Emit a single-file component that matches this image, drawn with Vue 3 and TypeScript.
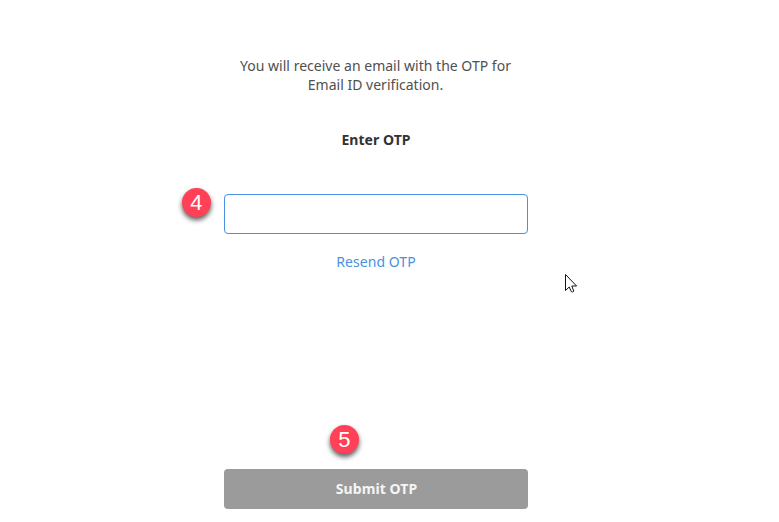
<script setup lang="ts">
import { ref } from 'vue'

const otp = ref<string>('')
</script>

<template>
  <main class="page">
    <form class="panel" @submit.prevent>
      <p class="intro">You will receive an email with the OTP for<br />Email ID verification.</p>
      <label class="label" for="otp">Enter OTP</label>
      <div class="field">
        <input id="otp" v-model="otp" class="input" type="text" />
        <span class="badge badge-input">4</span>
      </div>
      <a class="resend">Resend OTP</a>
      <div class="action">
        <button class="submit" type="submit">Submit OTP</button>
        <span class="badge badge-submit">5</span>
      </div>
    </form>
    <svg class="cursor" width="14" height="22" viewBox="0 0 14 22">
      <path d="M1.5 1.5V17.5L5.2 14L7.4 18.7Q8.6 19.6 9.8 18.2L7.8 13H12.6Z" fill="#fff" stroke="#111122" stroke-width="1" />
    </svg>
  </main>
</template>

<style>
body {
  margin: 0;
  background: #fff;
}
</style>

<style scoped>
.page {
  position: relative;
  box-sizing: border-box;
  width: 779px;
  height: 522px;
  padding: 56px 0 0 224px;
  overflow: hidden;
  font-family: "Noto Sans", sans-serif;
  font-size: 14px;
  line-height: 19px;
  color: #505050;
}
.panel {
  display: flex;
  flex-direction: column;
  align-items: center;
  width: 304px;
}
.intro {
  margin: 0;
  padding-right: 1px;
  text-align: center;
  white-space: nowrap;
  letter-spacing: 0.015px;
}
.label {
  margin-top: 36px;
  font-weight: 700;
  letter-spacing: 0.06px;
  color: #333;
}
.field {
  position: relative;
  width: 100%;
  height: 40px;
  margin-top: 45px;
}
.input {
  display: block;
  box-sizing: border-box;
  width: 100%;
  height: 40px;
  padding: 0 12px;
  border: 1px solid #4a90e2;
  border-radius: 4px;
  outline: none;
  background: #fff;
  font: inherit;
}
.resend {
  margin-top: 18px;
  letter-spacing: 0.06px;
  color: #4a90e2;
}
.action {
  position: relative;
  width: 100%;
  margin-top: 198px;
}
.submit {
  display: block;
  width: 100%;
  height: 40px;
  padding: 0 0 1px 1px;
  border: 0;
  border-radius: 4px;
  background: #9b9b9b;
  color: #f5f5f5;
  font: 700 14px/19px "Noto Sans", sans-serif;
  letter-spacing: 0.1px;
}
.badge {
  position: absolute;
  width: 29.5px;
  height: 29.5px;
  border-radius: 50%;
  background: #ff4056;
  box-shadow: 0 3px 5px rgba(0, 0, 0, 0.65);
  color: #fff;
  font: 22px/30px "Liberation Sans", sans-serif;
  text-align: center;
}
.badge-input {
  left: -42.4px;
  top: -6.4px;
}
.badge-submit {
  left: 105.6px;
  top: -44.4px;
}
.cursor {
  position: absolute;
  left: 564px;
  top: 273px;
}
</style>
